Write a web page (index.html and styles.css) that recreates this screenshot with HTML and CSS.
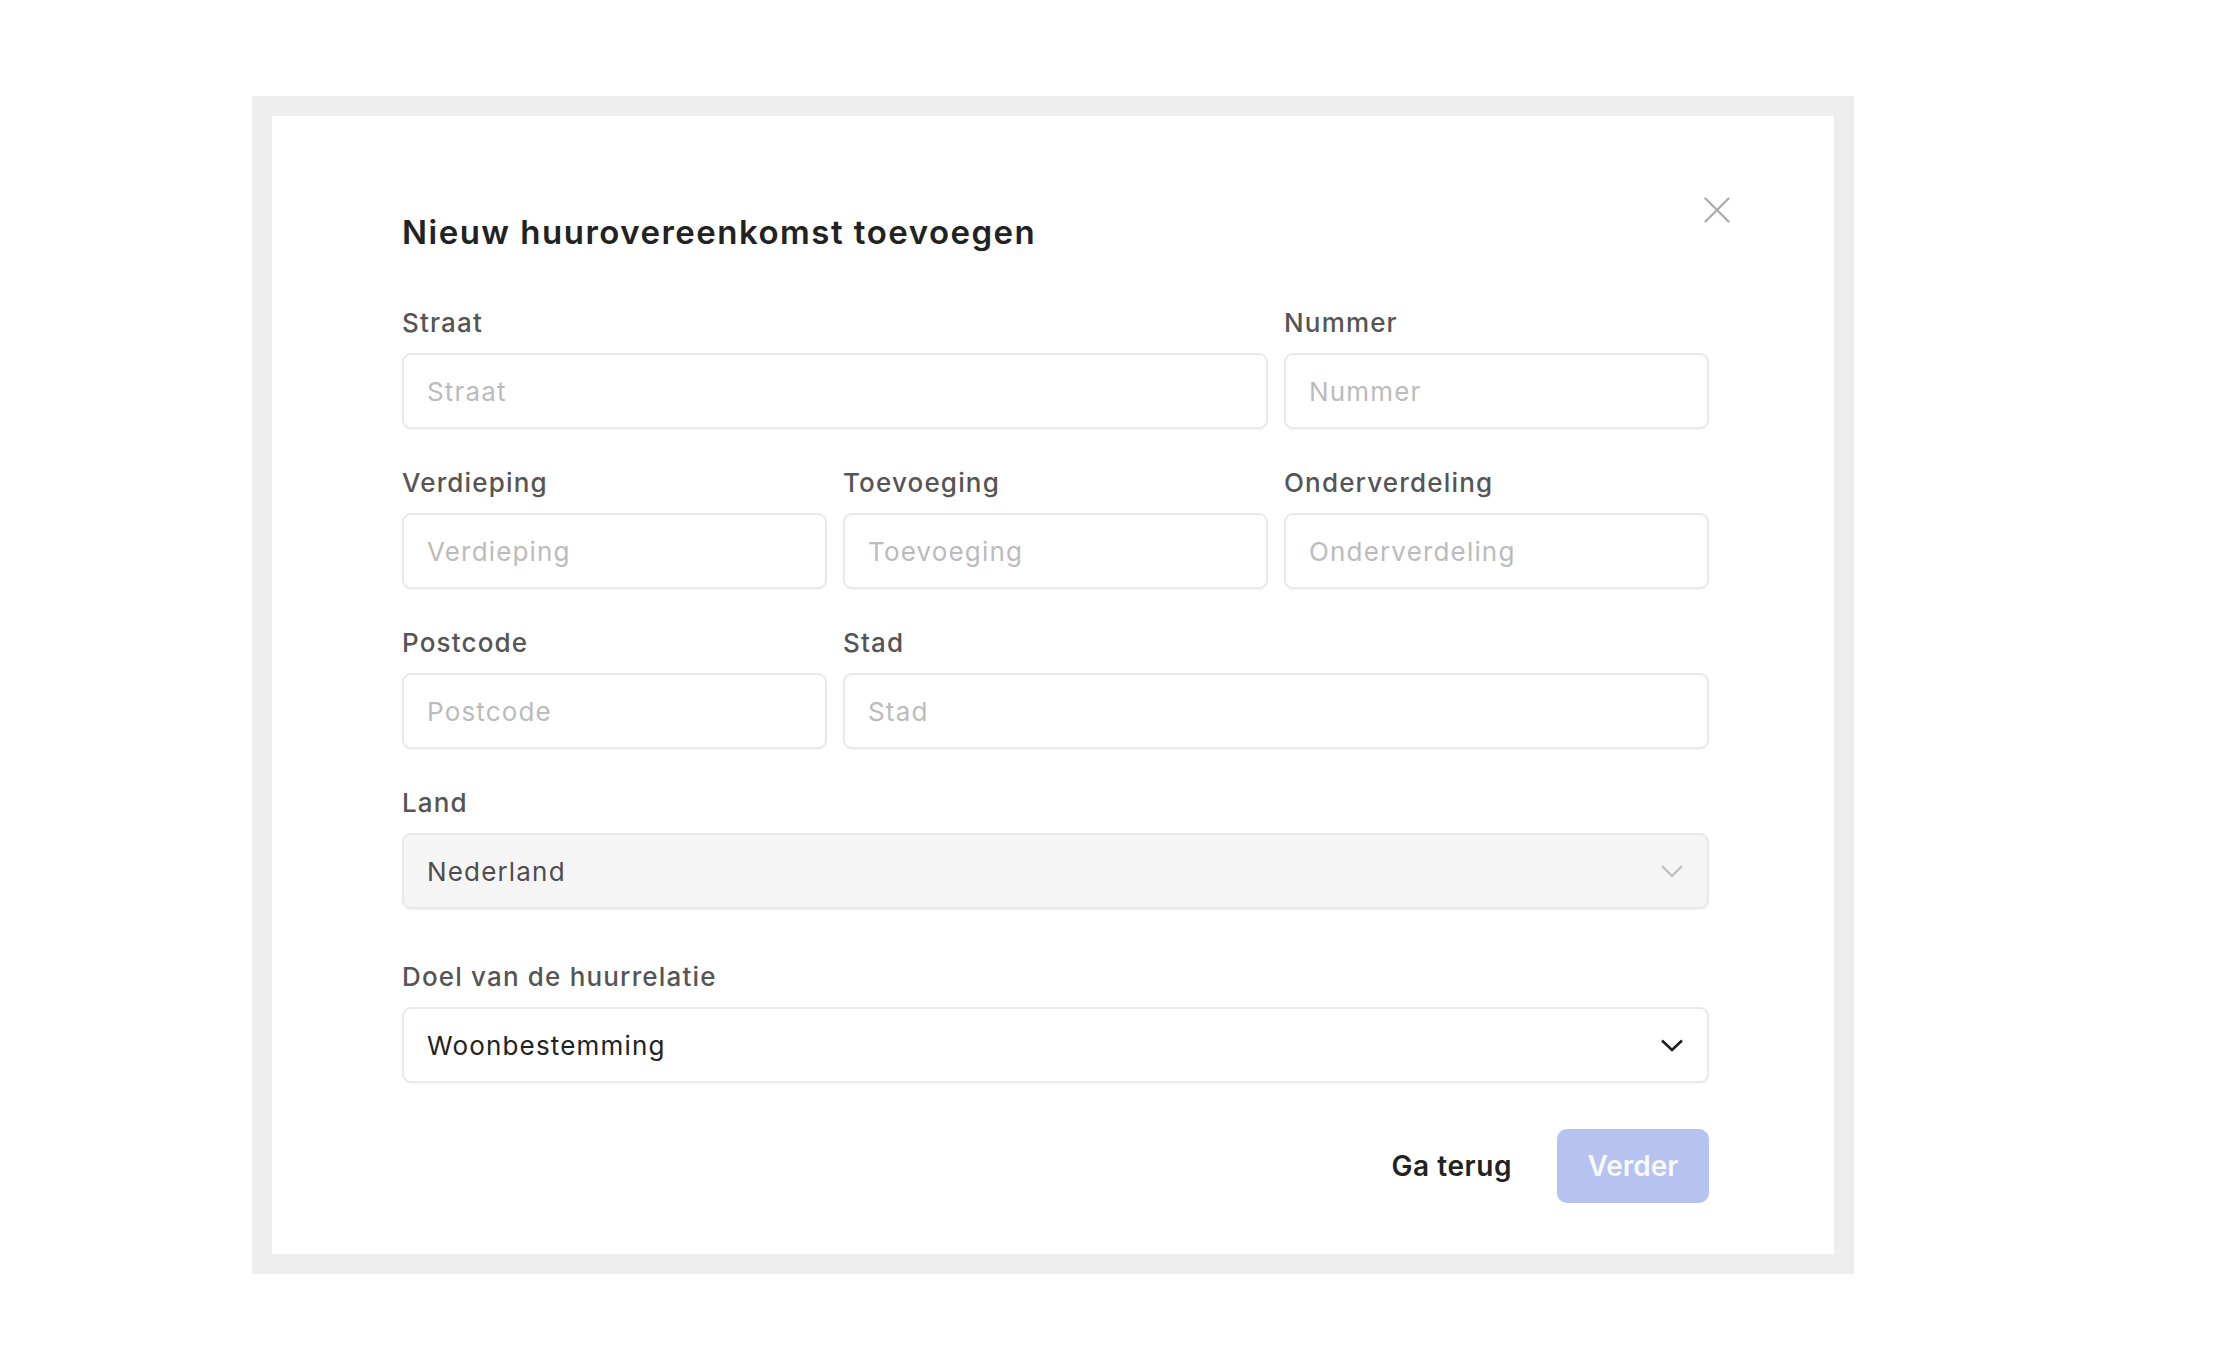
FILE: index.html
```html
<!DOCTYPE html>
<html lang="nl">
  <head>
    <meta charset="UTF-8" />
    <meta name="viewport" content="width=device-width, initial-scale=1.0" />
    <title>Nieuw huurovereenkomst toevoegen</title>
    <link rel="stylesheet" href="styles.css">
  </head>
  <body>
    <div class="page">
      <div class="frame">
        <div class="modal">
          <button class="close-button" type="button" aria-label="Sluiten">
            <svg width="26" height="26" viewBox="0 0 26 26">
              <path d="M1.5 1.5 L24.5 24.5 M24.5 1.5 L1.5 24.5" stroke="#adadad" stroke-width="2.4" fill="none" stroke-linecap="round" />
            </svg>
          </button>

          <h2 class="modal-title">Nieuw huurovereenkomst toevoegen</h2>

          <form class="form-grid">
            <div class="field span-2">
              <label for="straat">Straat</label>
              <input id="straat" type="text" placeholder="Straat" />
            </div>
            <div class="field">
              <label for="nummer">Nummer</label>
              <input id="nummer" type="text" placeholder="Nummer" />
            </div>

            <div class="field">
              <label for="verdieping">Verdieping</label>
              <input id="verdieping" type="text" placeholder="Verdieping" />
            </div>
            <div class="field">
              <label for="toevoeging">Toevoeging</label>
              <input id="toevoeging" type="text" placeholder="Toevoeging" />
            </div>
            <div class="field">
              <label for="onderverdeling">Onderverdeling</label>
              <input id="onderverdeling" type="text" placeholder="Onderverdeling" />
            </div>

            <div class="field">
              <label for="postcode">Postcode</label>
              <input id="postcode" type="text" placeholder="Postcode" />
            </div>
            <div class="field span-2">
              <label for="stad">Stad</label>
              <input id="stad" type="text" placeholder="Stad" />
            </div>

            <div class="field span-3">
              <label>Land</label>
              <div class="select select-disabled">
                <span>Nederland</span>
                <svg width="22" height="13" viewBox="0 0 22 13">
                  <polyline points="1,1 11,11 21,1" stroke="#bdbdbd" stroke-width="2" fill="none" />
                </svg>
              </div>
            </div>

            <div class="field span-3 field-spaced">
              <label>Doel van de huurrelatie</label>
              <div class="select">
                <span>Woonbestemming</span>
                <svg width="22" height="13" viewBox="0 0 22 13">
                  <polyline points="1,1.5 11,11 21,1.5" stroke="#1f1f1f" stroke-width="2.6" fill="none" />
                </svg>
              </div>
            </div>
          </form>

          <div class="actions">
            <button type="button" class="back-link">Ga terug</button>
            <button type="button" class="next-button" disabled>Verder</button>
          </div>
        </div>
      </div>
    </div>
  </body>
</html>
```

FILE: styles.css
```css
body {
  margin: 0;
  background: #fff;
  font-family: Inter, "Noto Sans", sans-serif;
  color: #222;
}

.page {
  padding: 96px 0 0 252px;
}

.frame {
  width: 1602px;
  box-sizing: border-box;
  border: 20px solid #eeeeee;
}

.modal {
  position: relative;
  background: #fff;
  padding: 94px 125px 52px 130px;
}

.close-button {
  position: absolute;
  top: 81px;
  right: 104px;
  width: 26px;
  height: 26px;
  padding: 0;
  border: none;
  background: none;
  cursor: pointer;
}

.close-button svg {
  display: block;
}

.modal-title {
  margin: 0 0 51px;
  font-size: 33px;
  line-height: 44px;
  font-weight: 600;
  letter-spacing: 0.045em;
  color: #222;
}

.form-grid {
  display: grid;
  grid-template-columns: repeat(3, 1fr);
  column-gap: 16px;
  row-gap: 36px;
}

.span-2 {
  grid-column: span 2;
}

.span-3 {
  grid-column: span 3;
}

.field-spaced {
  margin-top: 14px;
}

.field label {
  display: block;
  margin-bottom: 12px;
  font-size: 26px;
  line-height: 36px;
  font-weight: 500;
  letter-spacing: 0.045em;
  color: #555;
}

.field input,
.select {
  width: 100%;
  height: 76px;
  box-sizing: border-box;
  padding: 0 23px;
  border: 2px solid #e9e9e9;
  border-radius: 9px;
  box-shadow: 0 1px 2px rgba(0, 0, 0, 0.05);
  background: #fff;
  font-family: inherit;
  font-size: 26px;
  letter-spacing: 0.045em;
  color: #222;
}

.field input::placeholder {
  color: #bbbbbb;
}

.select {
  display: flex;
  align-items: center;
  justify-content: space-between;
  padding-right: 24px;
  color: #222;
}

.select svg {
  display: block;
}

.select-disabled {
  background: #f5f5f5;
  color: #4d4d4d;
}

.actions {
  display: flex;
  justify-content: flex-end;
  align-items: center;
  margin-top: 46px;
  margin-bottom: -1px;
}

.back-link {
  margin-right: 45px;
  padding: 0;
  border: none;
  background: none;
  font-family: inherit;
  font-size: 28px;
  font-weight: 600;
  letter-spacing: 0.02em;
  color: #222;
  cursor: pointer;
}

.next-button {
  width: 152px;
  height: 74px;
  border: none;
  border-radius: 10px;
  background: #b6c3f0;
  font-family: inherit;
  font-size: 28px;
  font-weight: 600;
  color: rgba(255, 255, 255, 0.92);
}

.next-button:disabled {
  cursor: not-allowed;
}
```
